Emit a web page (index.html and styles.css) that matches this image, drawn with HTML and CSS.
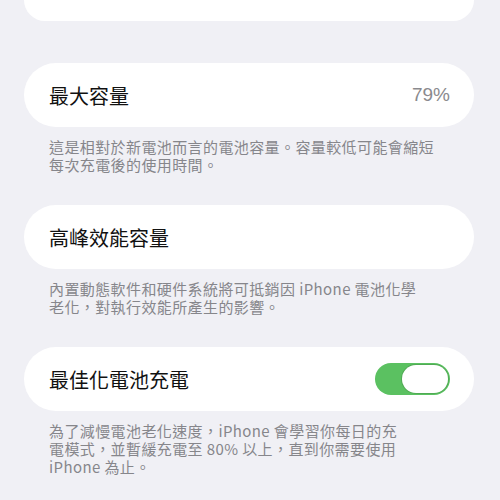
FILE: index.html
```html
<!DOCTYPE html>
<html lang="zh-Hant">

<head>
    <meta charset="UTF-8">
    <meta name="viewport" content="width=device-width, initial-scale=1.0">
    <title>電池健康度</title>
    <link rel="stylesheet" href="styles.css">
</head>

<body>
    <div class="container">
        <div class="card card-top"></div>

        <div class="card">
            <span class="card-title">最大容量</span>
            <span class="card-value">79%</span>
        </div>
        <p class="footnote">這是相對於新電池而言的電池容量。容量較低可能會縮短<br>每次充電後的使用時間。</p>

        <div class="card">
            <span class="card-title">高峰效能容量</span>
        </div>
        <p class="footnote">內置動態軟件和硬件系統將可抵銷因 iPhone 電池化學<br>老化，對執行效能所產生的影響。</p>

        <div class="card">
            <span class="card-title">最佳化電池充電</span>
            <div class="toggle on">
                <div class="toggle-knob"></div>
            </div>
        </div>
        <p class="footnote">為了減慢電池老化速度，iPhone 會學習你每日的充<br>電模式，並暫緩充電至 80% 以上，直到你需要使用<br>iPhone 為止。</p>
    </div>
</body>

</html>
```

FILE: styles.css
```css
body {
    font-family: "Noto Sans CJK TC", "Noto Sans", sans-serif;
    background-color: #f0f0f5;
    margin: 0;
    padding: 0;
}

.container {
    padding: 0 26px 0 24px;
    display: flex;
    flex-direction: column;
}

.card {
    background-color: #fff;
    border-radius: 32px;
    height: 64px;
    padding: 0 24px 0 25px;
    display: flex;
    align-items: center;
    justify-content: space-between;
    box-sizing: border-box;
}

.card-top {
    height: 21px;
    border-radius: 0 0 28px 28px;
    margin-bottom: 42px;
}

.card-title {
    font-size: 20px;
    color: #111;
}

.card-value {
    font-size: 19px;
    color: #8a8a8e;
    font-family: "Liberation Sans", "Noto Sans", sans-serif;
}

.footnote {
    margin: 0 0 31px;
    padding: 11px 25px 0;
    font-size: 15px;
    line-height: 18px;
    letter-spacing: 0.4px;
    color: #86868b;
}

.toggle {
    width: 75px;
    height: 32px;
    border-radius: 16px;
    background-color: #e5e5ea;
    display: flex;
    align-items: center;
    padding: 2px;
    box-sizing: border-box;
}

.toggle.on {
    background-color: #5bc161;
    justify-content: flex-end;
}

.toggle-knob {
    width: 46px;
    height: 28px;
    border-radius: 14px;
    background-color: #fff;
    box-shadow: 0 0 0 1px rgba(60, 130, 60, 0.35);
}
```
